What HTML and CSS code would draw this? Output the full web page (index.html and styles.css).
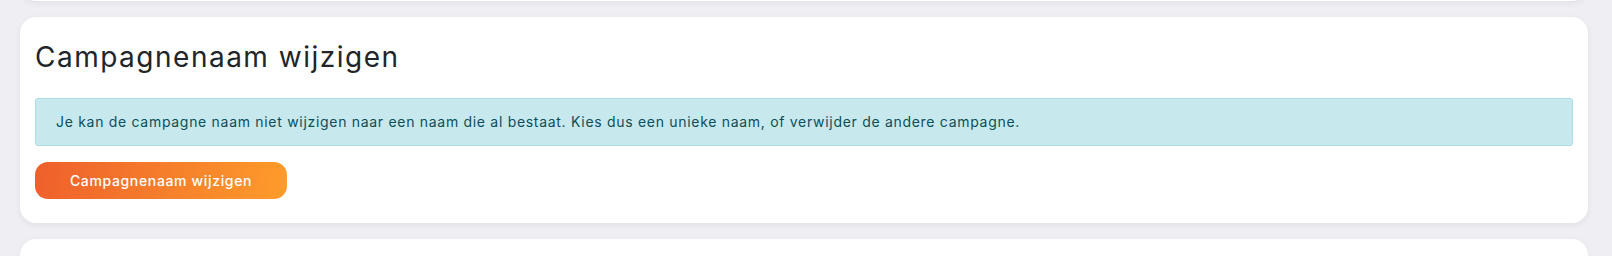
FILE: index.html
```html
<!DOCTYPE html>
<html lang="nl">
<head>
<meta charset="utf-8">
<title>Campagnenaam wijzigen</title>
<link rel="stylesheet" href="styles.css">
</head>
<body>
<div class="page">
  <div class="card card-prev"></div>
  <section class="card">
    <h2 class="title">Campagnenaam wijzigen</h2>
    <div class="alert">Je kan de campagne naam niet wijzigen naar een naam die al bestaat. Kies dus een unieke naam, of verwijder de andere campagne.</div>
    <button class="btn" type="button">Campagnenaam wijzigen</button>
  </section>
  <div class="card card-next"></div>
</div>
</body>
</html>
```

FILE: styles.css
```css
html, body {
  margin: 0;
  padding: 0;
  background: #efeef3;
  overflow: hidden;
}
body {
  font-family: Inter, "Liberation Sans", sans-serif;
  color: #212529;
}
.page {
  display: flex;
  flex-direction: column;
  gap: 16px;
  padding: 0 24px 0 20px;
  margin-top: -40px;
}
.card {
  background: #fff;
  border-radius: 16px;
  box-shadow: 0 2px 6px rgba(60, 60, 90, 0.08);
  padding: 15px 15px 24px 15px;
}
.card-prev {
  height: 41px;
  padding: 0;
}
.card-next {
  height: 17px;
  padding: 0;
  border-radius: 16px 16px 0 0;
}
.title {
  margin: 0;
  padding-top: 3px;
  font-size: 28px;
  font-weight: 400;
  letter-spacing: 1.5px;
  line-height: 44px;
  color: #212529;
}
.alert {
  margin-top: 19px;
  background: #c7e8ed;
  border: 1px solid #abdde4;
  border-radius: 3px;
  color: #0b4f5a;
  font-size: 14px;
  letter-spacing: 0.7px;
  line-height: 20px;
  padding: 13px 20px;
}
.btn {
  margin-top: 16px;
  width: 252px;
  height: 37px;
  border: 0;
  border-radius: 13px;
  background: linear-gradient(100deg, #ef5f2c 0%, #f57d2b 50%, #fe9c2b 100%);
  color: #fff;
  font-family: inherit;
  font-size: 14px;
  font-weight: 500;
  letter-spacing: 0.65px;
  cursor: pointer;
  display: block;
}
```
